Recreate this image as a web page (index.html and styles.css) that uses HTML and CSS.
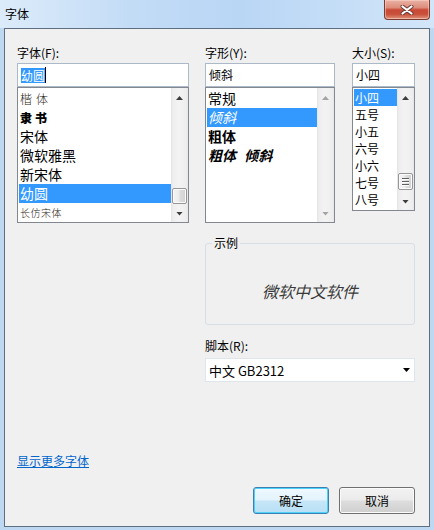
FILE: index.html
```html
<!DOCTYPE html>
<html lang="zh-CN">
<head>
<meta charset="utf-8">
<title>字体</title>
<link rel="stylesheet" href="styles.css">
</head>
<body>
<div class="window">
  <div class="titlebar">
    <span class="title">字体</span>
    <div class="close">
      <svg width="14" height="10" viewBox="0 0 14 10">
        <path d="M2.5 1.5 L11.5 8.5 M11.5 1.5 L2.5 8.5" stroke="#6a3a34" stroke-width="4" stroke-linecap="round"/>
        <path d="M2.5 1.5 L11.5 8.5 M11.5 1.5 L2.5 8.5" stroke="#ffffff" stroke-width="2.2" stroke-linecap="round"/>
      </svg>
    </div>
  </div>
  <div class="client">
    <div class="top">
      <div class="col col-font">
        <div class="lbl">字体(F):</div>
        <div class="input"><span class="hl">幼圆</span><span class="caret"></span></div>
        <div class="list list-font">
          <ul class="items">
            <li class="f-kai">楷体</li>
            <li class="f-li">隶书</li>
            <li>宋体</li>
            <li>微软雅黑</li>
            <li>新宋体</li>
            <li class="on">幼圆</li>
            <li class="f-fang">长仿宋体</li>
          </ul>
          <div class="sb">
            <div class="sb-btn up"><span class="arr arr-up"></span></div>
            <div class="track"><div class="thumb thumb-font"></div></div>
            <div class="sb-btn down"><span class="arr arr-down"></span></div>
          </div>
        </div>
      </div>
      <div class="col col-style">
        <div class="lbl">字形(Y):</div>
        <div class="input">倾斜</div>
        <div class="list list-style">
          <ul class="items">
            <li>常规</li>
            <li class="on it">倾斜</li>
            <li class="bd">粗体</li>
            <li class="bd it sp">粗体 倾斜</li>
          </ul>
          <div class="sb sb-off">
            <div class="sb-btn up"><span class="arr arr-up"></span></div>
            <div class="track"></div>
            <div class="sb-btn down"><span class="arr arr-down"></span></div>
          </div>
        </div>
      </div>
      <div class="col col-size">
        <div class="lbl">大小(S):</div>
        <div class="input">小四</div>
        <div class="list list-size">
          <ul class="items">
            <li class="on">小四</li>
            <li>五号</li>
            <li>小五</li>
            <li>六号</li>
            <li>小六</li>
            <li>七号</li>
            <li>八号</li>
          </ul>
          <div class="sb">
            <div class="sb-btn up"><span class="arr arr-up"></span></div>
            <div class="track"><div class="thumb thumb-size"><i></i><i></i><i></i></div></div>
            <div class="sb-btn down"><span class="arr arr-down"></span></div>
          </div>
        </div>
      </div>
    </div>
    <div class="lower">
      <fieldset class="sample">
        <legend>示例</legend>
        <div class="sample-text">微软中文软件</div>
      </fieldset>
      <div class="lbl lbl-script">脚本(R):</div>
      <div class="combo"><span>中文 GB2312</span><span class="arr arr-down combo-arr"></span></div>
    </div>
    <a class="more" href="#">显示更多字体</a>
    <div class="buttons">
      <div class="btn btn-ok">确定</div>
      <div class="btn btn-cancel">取消</div>
    </div>
  </div>
</div>
</body>
</html>
```

FILE: styles.css
```css
* { box-sizing: border-box; }
html, body { margin: 0; padding: 0; }
body {
  width: 434px;
  height: 530px;
  overflow: hidden;
  font-family: "Noto Sans CJK SC", "Microsoft YaHei", sans-serif;
  font-size: 12px;
  color: #000;
}
.window {
  width: 434px;
  height: 530px;
  display: flex;
  flex-direction: column;
  background: #bfd8f1;
}
.titlebar {
  height: 28px;
  flex: none;
  display: flex;
  align-items: flex-start;
  justify-content: space-between;
  background: linear-gradient(to right, #dcebfa 0%, #c3dcf6 30%, #b9d6f5 55%, #c6def7 80%, #d3e6f9 100%);
}
.title {
  padding-left: 5px;
  line-height: 28px;
  font-size: 12px;
}
.close {
  width: 46px;
  height: 20px;
  margin-right: 4px;
  border: 1px solid #7a3b31;
  border-top: none;
  border-radius: 0 0 4px 4px;
  background: linear-gradient(#eab3a5 0%, #dd8d7b 40%, #c84a36 52%, #c9503a 75%, #e0957f 100%);
  display: flex;
  align-items: center;
  justify-content: center;
  box-shadow: inset 0 0 0 1px rgba(255, 220, 210, 0.5);
}
.client {
  flex: 1;
  margin: 0 4px 3px 4px;
  border: 1px solid #5e6f82;
  background: #f0f0f0;
  padding: 16px 14px 0 12px;
}
.top { display: flex; align-items: flex-start; }
.col-font { width: 172px; margin-right: 16px; }
.col-style { width: 130px; margin-right: 17px; }
.col-size { width: 63px; }
.lbl {
  line-height: 16px;
  margin-bottom: 2px;
  font-size: 12px;
}
.input {
  height: 24px;
  border: 1px solid #abb9c8;
  background: #fff;
  padding-left: 3px;
  display: flex;
  align-items: center;
  font-size: 12px;
  line-height: 16px;
}
.hl { background: #3399ff; color: #fff; line-height: 15px; }
.caret { width: 1px; height: 16px; background: #000; }
.list {
  display: flex;
  border: 1px solid #828790;
  background: #fff;
}
.list-font, .list-style { height: 136px; }
.list-size { height: 124px; }
.items {
  flex: 1;
  list-style: none;
  margin: 0;
  padding: 1px 0 0 1px;
}
.items li {
  height: 19px;
  line-height: 19px;
  padding-left: 1px;
  white-space: nowrap;
  font-size: 14px;
}
.items li.on { background: #3399ff; color: #fff; }
.items li.it { font-style: italic; }
.items li.bd { font-weight: 700; }
.items li.sp { word-spacing: 5px; }
.items li.f-kai { font-size: 12px; font-weight: 300; letter-spacing: 4px; color: #2a2416; }
.items li.f-li { font-size: 12px; font-weight: 900; letter-spacing: 3px; }
.items li.f-fang { font-size: 10px; font-weight: 300; letter-spacing: 0.5px; color: #2a2416; }
.list-size .items li {
  height: 17px;
  line-height: 17px;
  font-size: 12px;
  padding-left: 1px;
}
.sb {
  width: 17px;
  flex: none;
  display: flex;
  flex-direction: column;
  background: linear-gradient(to right, #e4e4e4 0px, #eeeeee 2px, #f3f3f3 8px, #eeeeee 15px, #e7e7e7 17px);
}
.sb-btn {
  height: 17px;
  flex: none;
  display: flex;
  justify-content: center;
}
.sb-btn.up { align-items: flex-end; padding-bottom: 5px; }
.sb-btn.down { align-items: center; }
.track { flex: 1; }
.arr {
  display: block;
  width: 7px;
  height: 4px;
  background: #3c3c3c;
}
.arr-up { clip-path: polygon(50% 0, 100% 100%, 0 100%); }
.arr-down { clip-path: polygon(0 0, 100% 0, 50% 100%); }
.sb-off .arr { background: #a3a3a3; }
.thumb {
  margin: 0 1px;
  border: 1px solid #979797;
  border-radius: 2px;
  background: linear-gradient(to right, #f4f4f4 0%, #ececec 45%, #dcdcdc 55%, #d2d2d2 100%);
  box-shadow: inset 0 0 0 1px #fbfbfb;
}
.thumb-font { margin-top: 83px; height: 16px; }
.thumb-size { margin-top: 68px; height: 17px; display: flex; flex-direction: column; align-items: center; justify-content: center; gap: 1px; }
.thumb-size i {
  display: block;
  width: 7px;
  height: 2px;
  border-top: 1px solid #5f5f5f;
  border-bottom: 1px solid #fdfdfd;
}
.lower {
  margin-left: 188px;
  width: 210px;
  margin-top: 12px;
}
.sample {
  margin: 0;
  padding: 0;
  min-width: 0;
  height: 90px;
  border: 1px solid #d5dfe5;
  border-radius: 3px;
}
.sample legend {
  margin-left: 6px;
  padding: 0 2px;
  line-height: 16px;
  font-size: 12px;
}
.sample-text {
  margin-top: 29px;
  text-align: center;
  font-size: 16px;
  font-style: italic;
  line-height: 22px;
  color: #3a3a3a;
}
.lbl-script { margin-top: 13px; margin-bottom: 4px; }
.combo {
  height: 24px;
  border: 1px solid #dfe5ec;
  background: #fff;
  display: flex;
  align-items: center;
  justify-content: space-between;
  padding: 0 4px 0 3px;
  font-size: 13px;
}
.combo-arr { background: #000; }
.more {
  display: inline-block;
  margin-top: 71px;
  line-height: 16px;
  font-size: 12px;
  color: #0066cc;
  text-decoration: underline;
}
.buttons {
  margin-top: 18px;
  display: flex;
  justify-content: flex-end;
  gap: 10px;
}
.btn {
  width: 76px;
  height: 27px;
  border-radius: 3px;
  display: flex;
  align-items: center;
  justify-content: center;
  font-size: 12px;
}
.btn-ok {
  border: 1px solid #3c7fb1;
  background: linear-gradient(#f0f9fe 0%, #e3f3fc 48%, #c6e6f7 52%, #b8dff5 100%);
  box-shadow: inset 0 0 0 1px #4fd2f9;
}
.btn-cancel {
  border: 1px solid #707070;
  background: linear-gradient(#f2f2f2 0%, #ebebeb 48%, #dddddd 52%, #cfcfcf 100%);
  box-shadow: inset 0 0 0 1px #fbfbfb;
}
```
